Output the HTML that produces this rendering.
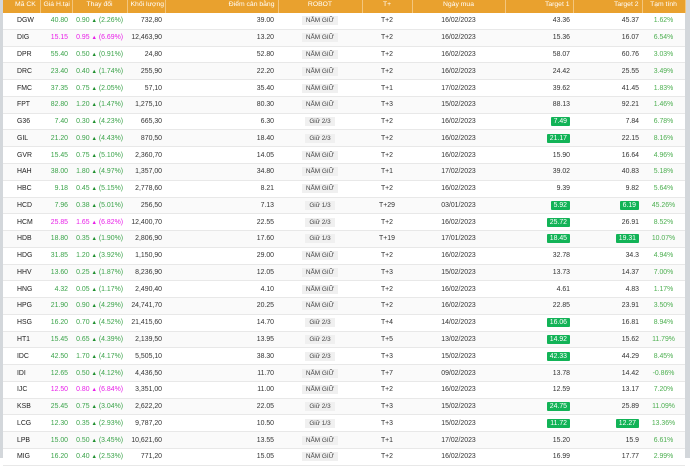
<!DOCTYPE html>
<html><head><meta charset="utf-8"><style>
body{margin:0;width:690px;height:458px;overflow:hidden;background:#fff;font-family:"Liberation Sans",sans-serif;position:relative}
.lb{position:absolute;left:0;top:0;width:3px;height:458px;background:#d3d7db}
.rb{position:absolute;left:685px;top:0;width:5px;height:458px;background:#d3d7db}
table{position:absolute;left:3px;top:0;width:682px;table-layout:fixed;border-collapse:collapse;font-size:6.9px;color:#333}
th{background:#e9a12e;color:#fff;font-weight:normal;height:12.6px;padding:0 3px;border-right:1px solid #f3c67e;font-size:6.8px;line-height:10px;white-space:nowrap;overflow:hidden;vertical-align:top}
td{height:16.77px;padding:0 4px;border-bottom:1px solid #e8e8e8;white-space:nowrap;box-sizing:border-box;overflow:hidden}
tr:nth-child(odd) td{background:#fafafa}
td:nth-child(1){padding-left:14px;color:#222}
td:nth-child(2),td:nth-child(3),td:nth-child(4),td:nth-child(5),td:nth-child(9),td:nth-child(10){text-align:right}
td:nth-child(4){padding-right:3px}
td:nth-child(9),td:nth-child(10){padding-right:3px}
td:nth-child(6),td:nth-child(7),td:nth-child(8),td:nth-child(11){text-align:center}
td:nth-child(11){color:#4caf50}
.g{color:#3aa349}.m{color:#e81ee8}.r{color:#e04848}
.a{font-size:5.5px;color:#1f8f2f}.m .a{color:#e81ee8}
.rb2{display:inline-block;background:#f0f0f0;padding:1px 4px;font-size:6.4px;color:#444}
.b{display:inline-block;background:#12b357;color:#fff;padding:1px 3px;border-radius:1px;line-height:7px}
</style></head><body>
<div class="lb"></div><div class="rb"></div>
<table>
<colgroup><col style="width:37px"><col style="width:32px"><col style="width:55px"><col style="width:38px"><col style="width:113px"><col style="width:84px"><col style="width:50px"><col style="width:93px"><col style="width:68px"><col style="width:69px"><col style="width:43px"></colgroup>
<tr><th style="text-align:left;padding-left:12px">Mã CK</th><th>Giá H.tại</th><th>Thay đổi</th><th style="text-align:right">Khối lượng</th><th style="text-align:right">Điểm cân bằng</th><th>ROBOT</th><th>T+</th><th>Ngày mua</th><th style="text-align:right">Target 1</th><th style="text-align:right">Target 2</th><th>Tạm tính</th></tr>
<tr><td>DGW</td><td class="g">40.80</td><td class="g">0.90 <span class="a">▲</span> (2.26%)</td><td>732,80</td><td>39.00</td><td><span class="rb2">NẮM GIỮ</span></td><td>T+2</td><td>16/02/2023</td><td>43.36</td><td>45.37</td><td>1.62%</td></tr>
<tr><td>DIG</td><td class="m">15.15</td><td class="m">0.95 <span class="a">▲</span> (6.69%)</td><td>12,463,90</td><td>13.20</td><td><span class="rb2">NẮM GIỮ</span></td><td>T+2</td><td>16/02/2023</td><td>15.36</td><td>16.07</td><td>6.54%</td></tr>
<tr><td>DPR</td><td class="g">55.40</td><td class="g">0.50 <span class="a">▲</span> (0.91%)</td><td>24,80</td><td>52.80</td><td><span class="rb2">NẮM GIỮ</span></td><td>T+2</td><td>16/02/2023</td><td>58.07</td><td>60.76</td><td>3.03%</td></tr>
<tr><td>DRC</td><td class="g">23.40</td><td class="g">0.40 <span class="a">▲</span> (1.74%)</td><td>255,90</td><td>22.20</td><td><span class="rb2">NẮM GIỮ</span></td><td>T+2</td><td>16/02/2023</td><td>24.42</td><td>25.55</td><td>3.49%</td></tr>
<tr><td>FMC</td><td class="g">37.35</td><td class="g">0.75 <span class="a">▲</span> (2.05%)</td><td>57,10</td><td>35.40</td><td><span class="rb2">NẮM GIỮ</span></td><td>T+1</td><td>17/02/2023</td><td>39.62</td><td>41.45</td><td>1.83%</td></tr>
<tr><td>FPT</td><td class="g">82.80</td><td class="g">1.20 <span class="a">▲</span> (1.47%)</td><td>1,275,10</td><td>80.30</td><td><span class="rb2">NẮM GIỮ</span></td><td>T+3</td><td>15/02/2023</td><td>88.13</td><td>92.21</td><td>1.46%</td></tr>
<tr><td>G36</td><td class="g">7.40</td><td class="g">0.30 <span class="a">▲</span> (4.23%)</td><td>665,30</td><td>6.30</td><td><span class="rb2">Giữ 2/3</span></td><td>T+2</td><td>16/02/2023</td><td><span class="b">7.49</span></td><td>7.84</td><td>6.78%</td></tr>
<tr><td>GIL</td><td class="g">21.20</td><td class="g">0.90 <span class="a">▲</span> (4.43%)</td><td>870,50</td><td>18.40</td><td><span class="rb2">Giữ 2/3</span></td><td>T+2</td><td>16/02/2023</td><td><span class="b">21.17</span></td><td>22.15</td><td>8.16%</td></tr>
<tr><td>GVR</td><td class="g">15.45</td><td class="g">0.75 <span class="a">▲</span> (5.10%)</td><td>2,360,70</td><td>14.05</td><td><span class="rb2">NẮM GIỮ</span></td><td>T+2</td><td>16/02/2023</td><td>15.90</td><td>16.64</td><td>4.96%</td></tr>
<tr><td>HAH</td><td class="g">38.00</td><td class="g">1.80 <span class="a">▲</span> (4.97%)</td><td>1,357,00</td><td>34.80</td><td><span class="rb2">NẮM GIỮ</span></td><td>T+1</td><td>17/02/2023</td><td>39.02</td><td>40.83</td><td>5.18%</td></tr>
<tr><td>HBC</td><td class="g">9.18</td><td class="g">0.45 <span class="a">▲</span> (5.15%)</td><td>2,778,60</td><td>8.21</td><td><span class="rb2">NẮM GIỮ</span></td><td>T+2</td><td>16/02/2023</td><td>9.39</td><td>9.82</td><td>5.64%</td></tr>
<tr><td>HCD</td><td class="g">7.96</td><td class="g">0.38 <span class="a">▲</span> (5.01%)</td><td>256,50</td><td>7.13</td><td><span class="rb2">Giữ 1/3</span></td><td>T+29</td><td>03/01/2023</td><td><span class="b">5.92</span></td><td><span class="b">6.19</span></td><td>45.26%</td></tr>
<tr><td>HCM</td><td class="m">25.85</td><td class="m">1.65 <span class="a">▲</span> (6.82%)</td><td>12,400,70</td><td>22.55</td><td><span class="rb2">Giữ 2/3</span></td><td>T+2</td><td>16/02/2023</td><td><span class="b">25.72</span></td><td>26.91</td><td>8.52%</td></tr>
<tr><td>HDB</td><td class="g">18.80</td><td class="g">0.35 <span class="a">▲</span> (1.90%)</td><td>2,806,90</td><td>17.60</td><td><span class="rb2">Giữ 1/3</span></td><td>T+19</td><td>17/01/2023</td><td><span class="b">18.45</span></td><td><span class="b">19.31</span></td><td>10.07%</td></tr>
<tr><td>HDG</td><td class="g">31.85</td><td class="g">1.20 <span class="a">▲</span> (3.92%)</td><td>1,150,90</td><td>29.00</td><td><span class="rb2">NẮM GIỮ</span></td><td>T+2</td><td>16/02/2023</td><td>32.78</td><td>34.3</td><td>4.94%</td></tr>
<tr><td>HHV</td><td class="g">13.60</td><td class="g">0.25 <span class="a">▲</span> (1.87%)</td><td>8,236,90</td><td>12.05</td><td><span class="rb2">NẮM GIỮ</span></td><td>T+3</td><td>15/02/2023</td><td>13.73</td><td>14.37</td><td>7.00%</td></tr>
<tr><td>HNG</td><td class="g">4.32</td><td class="g">0.05 <span class="a">▲</span> (1.17%)</td><td>2,490,40</td><td>4.10</td><td><span class="rb2">NẮM GIỮ</span></td><td>T+2</td><td>16/02/2023</td><td>4.61</td><td>4.83</td><td>1.17%</td></tr>
<tr><td>HPG</td><td class="g">21.90</td><td class="g">0.90 <span class="a">▲</span> (4.29%)</td><td>24,741,70</td><td>20.25</td><td><span class="rb2">NẮM GIỮ</span></td><td>T+2</td><td>16/02/2023</td><td>22.85</td><td>23.91</td><td>3.50%</td></tr>
<tr><td>HSG</td><td class="g">16.20</td><td class="g">0.70 <span class="a">▲</span> (4.52%)</td><td>21,415,60</td><td>14.70</td><td><span class="rb2">Giữ 2/3</span></td><td>T+4</td><td>14/02/2023</td><td><span class="b">16.06</span></td><td>16.81</td><td>8.94%</td></tr>
<tr><td>HT1</td><td class="g">15.45</td><td class="g">0.65 <span class="a">▲</span> (4.39%)</td><td>2,139,50</td><td>13.95</td><td><span class="rb2">Giữ 2/3</span></td><td>T+5</td><td>13/02/2023</td><td><span class="b">14.92</span></td><td>15.62</td><td>11.79%</td></tr>
<tr><td>IDC</td><td class="g">42.50</td><td class="g">1.70 <span class="a">▲</span> (4.17%)</td><td>5,505,10</td><td>38.30</td><td><span class="rb2">Giữ 2/3</span></td><td>T+3</td><td>15/02/2023</td><td><span class="b">42.33</span></td><td>44.29</td><td>8.45%</td></tr>
<tr><td>IDI</td><td class="g">12.65</td><td class="g">0.50 <span class="a">▲</span> (4.12%)</td><td>4,436,50</td><td>11.70</td><td><span class="rb2">NẮM GIỮ</span></td><td>T+7</td><td>09/02/2023</td><td>13.78</td><td>14.42</td><td class="r">-0.86%</td></tr>
<tr><td>IJC</td><td class="m">12.50</td><td class="m">0.80 <span class="a">▲</span> (6.84%)</td><td>3,351,00</td><td>11.00</td><td><span class="rb2">NẮM GIỮ</span></td><td>T+2</td><td>16/02/2023</td><td>12.59</td><td>13.17</td><td>7.20%</td></tr>
<tr><td>KSB</td><td class="g">25.45</td><td class="g">0.75 <span class="a">▲</span> (3.04%)</td><td>2,622,20</td><td>22.05</td><td><span class="rb2">Giữ 2/3</span></td><td>T+3</td><td>15/02/2023</td><td><span class="b">24.75</span></td><td>25.89</td><td>11.09%</td></tr>
<tr><td>LCG</td><td class="g">12.30</td><td class="g">0.35 <span class="a">▲</span> (2.93%)</td><td>9,787,20</td><td>10.50</td><td><span class="rb2">Giữ 1/3</span></td><td>T+3</td><td>15/02/2023</td><td><span class="b">11.72</span></td><td><span class="b">12.27</span></td><td>13.36%</td></tr>
<tr><td>LPB</td><td class="g">15.00</td><td class="g">0.50 <span class="a">▲</span> (3.45%)</td><td>10,621,60</td><td>13.55</td><td><span class="rb2">NẮM GIỮ</span></td><td>T+1</td><td>17/02/2023</td><td>15.20</td><td>15.9</td><td>6.61%</td></tr>
<tr><td>MIG</td><td class="g">16.20</td><td class="g">0.40 <span class="a">▲</span> (2.53%)</td><td>771,20</td><td>15.05</td><td><span class="rb2">NẮM GIỮ</span></td><td>T+2</td><td>16/02/2023</td><td>16.99</td><td>17.77</td><td>2.99%</td></tr>
</table>
</body></html>
